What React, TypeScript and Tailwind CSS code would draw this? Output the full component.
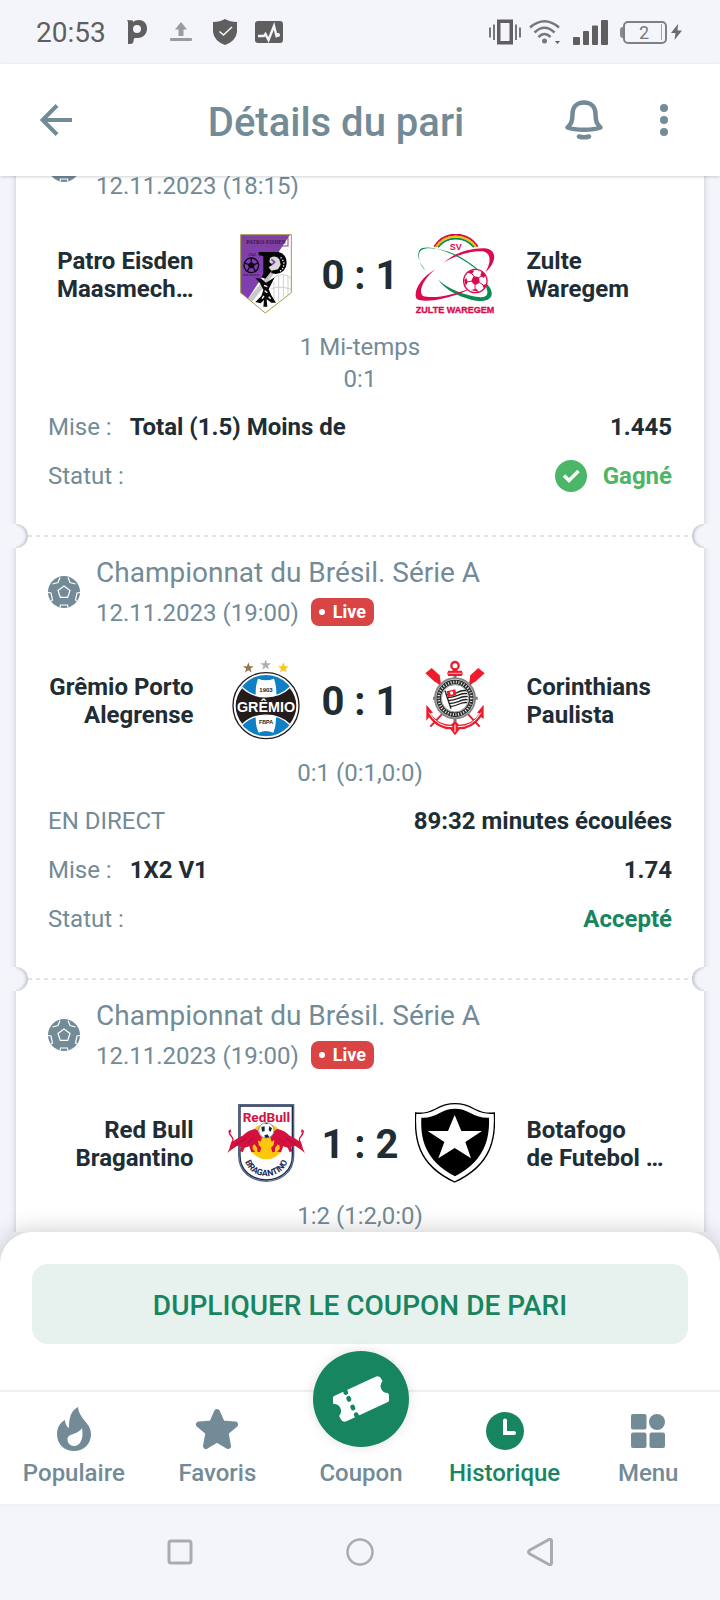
import type { ReactNode } from 'react';
import clsx from 'clsx';

type Team = { name: string[]; logo: ReactNode };

type Bet = {
  id: number;
  league?: string;
  date: string;
  live?: boolean;
  home: Team;
  away: Team;
  score: string;
  periods: string[];
  elapsed?: string;
  pick?: string;
  odds?: string;
  status?: 'won' | 'accepted';
};

const starPoints = '0,-10 2.4,-3.1 9.5,-3.1 3.8,1.2 5.9,8.1 0,3.9 -5.9,8.1 -3.8,1.2 -9.5,-3.1 -2.4,-3.1';

/* Club crests, all on a 240 unit grid */

function PatroLogo() {
  return (
    <svg viewBox="0 0 240 240" className="size-20" aria-hidden="true">
      <path d="M44 2H196V176L118 237L44 176Z" fill="#fff" />
      <path d="M44 2H192L66 194L44 176Z" fill="#7f3fae" />
      <path d="M134 112L66 194L78 204L142 122Z" fill="#c9c9c9" />
      <rect x="54" y="12" width="132" height="24" fill="none" stroke="#7a4a78" strokeWidth="3" />
      <text x="120" y="30" textAnchor="middle" fontSize="16" fontWeight="700" fill="#3a1550" fontFamily="Liberation Serif, serif">PATRO-EISDEN</text>
      <text x="78" y="66" textAnchor="middle" fontSize="12" fill="#1c0a28" fontFamily="Liberation Serif, serif">1942</text>
      <path d="M98 54H158Q182 60 182 88Q180 116 150 120L136 118V112L118 134L106 130L112 120V66L98 64Z" fill="#050505" />
      <path d="M132 72Q150 62 160 76L164 92L156 106L136 110L128 100L140 92L130 84Z" fill="#d9d9d9" />
      <path d="M136 76L146 84L138 92" fill="none" stroke="#7f3fae" strokeWidth="5" />
      <path d="M164 70L174 84L172 102L160 114" fill="none" stroke="#fff" strokeWidth="4" strokeDasharray="4 5" />
      <circle cx="76" cy="94" r="22" fill="none" stroke="#0c0512" strokeWidth="4" />
      <path d="M76 83L87 91L83 103H69L65 91Z" fill="#0c0512" />
      <path d="M76 83V72M87 91L97 86M83 103L89 112M69 103L63 112M65 91L55 86" stroke="#0c0512" strokeWidth="4" />
      <path d="M52 123H100" stroke="#3a1550" strokeWidth="3" strokeDasharray="6 2" />
      <path d="M132 152Q140 122 170 122Q190 124 196 136M144 144V196M158 126V200M172 122V190M186 126V180M136 164Q160 154 196 166" fill="none" stroke="#cfcfcf" strokeWidth="3" />
      <path d="M88 132L106 134L120 146L146 130L136 150L128 166L136 184L150 206H136L122 196L124 218H112L114 198L104 208L88 204L106 186L112 168L102 148Z" fill="#080808" />
      <path d="M114 154L124 158M116 170L124 176M128 188L134 194M108 194L114 186" stroke="#fff" strokeWidth="4" />
      <path d="M44 2H196V176L118 237L44 176Z" fill="none" stroke="#a49a4a" strokeWidth="3" />
    </svg>
  );
}

function ZulteLogo() {
  return (
    <svg viewBox="0 0 240 240" className="size-20" fill="none" aria-hidden="true">
      <path d="M58 38C88-10 156-10 188 38" stroke="#dc0a4c" strokeWidth="6" />
      <path d="M63 39C92-3 152-3 183 39" stroke="#f3c300" strokeWidth="6" />
      <path d="M69 40C96 5 148 5 177 40" stroke="#0b8a4d" strokeWidth="5" />
      <text x="122" y="47" textAnchor="middle" fontSize="27" fontWeight="700" fill="#dc0a4c" fontFamily="Liberation Sans, sans-serif">SV</text>
      <path d="M31 108C8 82 2 50 22 42C60 32 144 66 210 128C196 110 144 60 68 44C30 40 12 42 12 66C12 84 20 100 31 108Z" fill="#0b8a4d" />
      <path d="M216 150C242 178 230 200 200 201C160 201 94 174 70 137C94 162 148 184 196 190C218 190 222 180 212 156Z" fill="#0b8a4d" />
      <path d="M86 86C116 58 164 42 208 43C248 46 246 84 211 115C228 86 230 58 204 52C172 49 120 64 86 86Z" fill="#dc0a4c" />
      <path d="M62 106C14 130-8 180 6 195C24 208 110 196 178 158C120 182 56 196 24 186C8 174 26 132 62 106Z" fill="#dc0a4c" />
      <circle cx="181" cy="141" r="35" fill="#fff" stroke="#dc0a4c" strokeWidth="4" />
      <path d="M176 126L192 130L194 146L180 154L168 142ZM158 116L168 108L178 110L170 120ZM200 112L212 124L206 132L196 124ZM148 138L154 132L158 144L152 156ZM168 168L184 164L192 174ZM202 154L214 150L208 166Z" fill="#dc0a4c" />
      <path d="M176 126L170 118M192 130L202 126M194 146L206 154M180 154L180 166M168 142L156 144" stroke="#dc0a4c" strokeWidth="3" />
      <text x="120" y="237" textAnchor="middle" fontSize="27" fontWeight="700" fill="#dc0a4c" stroke="#dc0a4c" strokeWidth="1" fontFamily="Liberation Sans, sans-serif">ZULTE WAREGEM</text>
    </svg>
  );
}

function GremioLogo() {
  return (
    <svg viewBox="0 0 240 240" className="size-20" aria-hidden="true">
      <g transform="translate(67 24) scale(1.7)"><polygon points={starPoints} fill="#95754e" /></g>
      <g transform="translate(119 15) scale(1.7)"><polygon points={starPoints} fill="#b1b1b1" /></g>
      <g transform="translate(172 24) scale(1.7)"><polygon points={starPoints} fill="#fcc60a" /></g>
      <circle cx="120" cy="137" r="99" fill="#fff" stroke="#231c1a" strokeWidth="4" />
      <circle cx="120" cy="137" r="92" fill="#0f80c4" />
      <path d="M96 56Q120 66 144 56Q154 84 150 120H90Q86 84 96 56Z" fill="#fff" />
      <path d="M90 154H150Q152 196 142 218Q120 208 98 218Q86 196 90 154Z" fill="#fff" />
      <path d="M48 82C86 120 154 120 192 82C220 116 220 158 192 194C154 156 86 156 48 194C20 158 20 116 48 82Z" fill="#231c1a" stroke="#fff" strokeWidth="4" />
      <text x="120" y="97" textAnchor="middle" fontSize="18" fontWeight="700" fill="#231c1a" fontFamily="Liberation Sans, sans-serif">1903</text>
      <text x="120" y="156" textAnchor="middle" fontSize="43" fontWeight="700" fill="#fff" fontFamily="Liberation Sans, sans-serif">GRÊMIO</text>
      <text x="120" y="192" textAnchor="middle" fontSize="16" fontWeight="700" fill="#231c1a" fontFamily="Liberation Sans, sans-serif">FBPA</text>
    </svg>
  );
}

function CorinthiansLogo() {
  return (
    <svg viewBox="0 0 240 240" className="size-20" fill="none" aria-hidden="true">
      <path d="M64 62L194 200M176 62L46 200" stroke="#ee1c2b" strokeWidth="6" />
      <path d="M31 40L50 24L74 46L78 72L60 66Z" fill="#ee1c2b" />
      <path d="M209 40L190 24L166 46L162 72L180 66Z" fill="#ee1c2b" />
      <circle cx="120" cy="17" r="11" stroke="#ee1c2b" strokeWidth="7" />
      <path d="M113 26H127V32H140Q146 40 140 48H100Q94 40 100 32H113Z" fill="#ee1c2b" />
      <path d="M100 40H140" stroke="#fff" strokeWidth="2" />
      <path d="M34 134L54 158L46 160Q68 194 108 194L120 182L132 194Q172 194 194 160L186 158L206 134V176L198 172Q172 208 134 208L120 226L106 208Q68 208 42 172L34 182Z" fill="#ee1c2b" />
      <path d="M42 158Q68 202 112 200M198 158Q172 202 128 200M120 194V216" stroke="#fff" strokeWidth="3" />
      <path d="M120 48V186M54 115H188" stroke="#777" strokeWidth="9" />
      <circle cx="120" cy="115" r="60" fill="#fff" stroke="#858585" strokeWidth="6" />
      <circle cx="120" cy="115" r="49" stroke="#2c2c2c" strokeWidth="14" />
      <circle cx="120" cy="115" r="49" stroke="#e9e9e9" strokeWidth="8" strokeDasharray="3 5" />
      <circle cx="120" cy="115" r="41" fill="#fff" stroke="#666" strokeWidth="2" />
      <path d="M96 104Q112 104 126 98Q140 90 154 92M98 113Q114 112 128 106Q142 99 156 101M100 122Q116 121 130 115Q144 108 158 110M102 131Q118 130 132 124Q146 117 158 119M104 140Q120 138 133 132Q147 126 156 128M90 92L108 146" stroke="#1f1f1f" strokeWidth="4" />
      <path d="M95 94L121 88L124 106L99 111Z" fill="#ee1c2b" />
      <circle cx="110" cy="99" r="5" fill="#fff" />
    </svg>
  );
}

function BragantinoBull() {
  return (
    <>
      <path d="M4 150L10 138L14 122Q26 108 50 98Q66 82 86 78Q96 80 100 92L108 104L104 116L96 112L98 126L106 134L102 148L94 146V136L86 124L80 128L80 138L88 146L76 148L70 130L56 134L50 148L42 144L46 132L34 128L16 140Z" fill="#d5103f" />
      <path d="M16 120Q26 110 16 100Q8 92 10 82" fill="none" stroke="#d5103f" strokeWidth="4" />
      <path d="M8 84L14 78L16 90Z" fill="#d5103f" />
      <path d="M40 118L62 106M66 120L80 106M28 126L40 118" stroke="#8d0b30" strokeWidth="2" />
    </>
  );
}

function BragantinoLogo() {
  return (
    <svg viewBox="0 0 240 240" className="size-20" aria-hidden="true">
      <path d="M38 5H203V158C203 206 166 234 121 235C76 234 38 206 38 158Z" fill="#fff" stroke="#56657f" strokeWidth="4" />
      <path d="M42 9H199V158C199 203 164 230 121 231C78 230 42 203 42 158Z" fill="none" stroke="#1b2a55" strokeWidth="4" />
      <text x="121" y="58" textAnchor="middle" fontSize="41" fontWeight="700" fill="#d5103f" fontFamily="Roboto, sans-serif">RedBull</text>
      <circle cx="121" cy="116" r="53" fill="#fdc70c" />
      <BragantinoBull />
      <g transform="translate(241 0) scale(-1 1)"><BragantinoBull /></g>
      <circle cx="121" cy="82" r="23" fill="#fff" stroke="#8d93a3" strokeWidth="3" />
      <path d="M106 72L116 70L116 84L108 86ZM130 70L138 76L134 86L128 82ZM114 98L124 94L130 102L120 105ZM116 60L126 60L122 64Z" fill="#16213f" />
      <path id="bragantino-arc" d="M54 156C58 240 184 240 188 156" fill="none" />
      <text fontSize="26" fontWeight="700" fill="#1b2a55" fontFamily="Roboto, sans-serif">
        <textPath href="#bragantino-arc" startOffset="50%" textAnchor="middle">BRAGANTINO</textPath>
      </text>
    </svg>
  );
}

function BotafogoLogo() {
  return (
    <svg viewBox="0 0 240 240" className="size-20" aria-hidden="true">
      <path d="M2 30Q32 34 62 18Q90 2 120 2Q150 2 178 18Q208 34 238 30C242 100 234 184 119 237C4 184-2 100 2 30Z" fill="#fff" stroke="#000" strokeWidth="4" />
      <path d="M19 44Q46 46 74 30Q96 17 120 17Q144 17 166 30Q194 46 222 44C224 104 212 172 120 220C28 172 16 104 19 44Z" fill="#000" />
      <path d="M119 36L139 84H201L151 117L168 166L119 135L70 166L88 117L38 84H99Z" fill="#fff" />
    </svg>
  );
}

function BallIcon() {
  return (
    <svg viewBox="0 0 32 32" className="size-8 shrink-0" fill="none" stroke="#fff" strokeWidth="1.2" aria-hidden="true">
      <circle cx="16" cy="16" r="16" fill="#728b97" stroke="none" />
      <path d="M16 10L22 14.400L19.700 21.400H12.300L10 14.400Z" />
      <path d="M4.500 8L10 6.500L12 1.500M27.500 8L22 6.500L20 1.500" />
      <path d="M0 16.500L3 17L4.500 24L3 25M32 16.500L29 17L27.500 24L29 25M12 31.500L12.500 29H19.500L20 31.500" />
    </svg>
  );
}

const bets: Bet[] = [
  {
    id: 1,
    date: '12.11.2023 (18:15)',
    home: { name: ['Patro Eisden', 'Maasmech…'], logo: <PatroLogo /> },
    away: { name: ['Zulte', 'Waregem'], logo: <ZulteLogo /> },
    score: '0 : 1',
    periods: ['1 Mi-temps', '0:1'],
    pick: 'Total (1.5) Moins de',
    odds: '1.445',
    status: 'won',
  },
  {
    id: 2,
    league: 'Championnat du Brésil. Série A',
    date: '12.11.2023 (19:00)',
    live: true,
    home: { name: ['Grêmio Porto', 'Alegrense'], logo: <GremioLogo /> },
    away: { name: ['Corinthians', 'Paulista'], logo: <CorinthiansLogo /> },
    score: '0 : 1',
    periods: ['0:1 (0:1,0:0)'],
    elapsed: '89:32 minutes écoulées',
    pick: '1X2 V1',
    odds: '1.74',
    status: 'accepted',
  },
  {
    id: 3,
    league: 'Championnat du Brésil. Série A',
    date: '12.11.2023 (19:00)',
    live: true,
    home: { name: ['Red Bull', 'Bragantino'], logo: <BragantinoLogo /> },
    away: { name: ['Botafogo', 'de Futebol …'], logo: <BotafogoLogo /> },
    score: '1 : 2',
    periods: ['1:2 (1:2,0:0)'],
  },
];

function StatusBar() {
  return (
    <div className="flex h-16 shrink-0 items-center justify-between bg-[#f4f5fa] pr-[38px] pl-9 text-[#5f5f60]">
      <div className="flex items-center">
        <span className="w-[91px] pt-0.5 text-[28px]">20:53</span>
        <svg viewBox="0 0 20 26" className="mr-[22px] h-[26px] w-5" aria-hidden="true">
          <path d="M0 1L6 1.500V3Q8 1 12 1C17 1 20 5 20 9.500C20 15 16 19 11 19H7.500Q6.500 20 6.500 22Q6.500 25 3 25H1V4Q1 2 0 1ZM10 6A4 4 0 1 0 10 14A4 4 0 1 0 10 6Z" fill="currentColor" fillRule="evenodd" />
        </svg>
        <svg viewBox="0 0 24 20" className="mr-5 h-5 w-6" fill="#9b9b9d" aria-hidden="true">
          <path d="M12 0L18 7.500H14.500V14H9.500V7.500H6Z" />
          <rect x="1" y="16" width="22" height="3" rx="1" />
        </svg>
        <svg viewBox="0 0 24 26" className="mr-[18px] h-[26px] w-6" aria-hidden="true">
          <path d="M12 0Q17 3 24 3V13Q23 22 12 26Q1 22 0 13V3Q7 3 12 0Z" fill="currentColor" />
          <path d="M6.500 12.500L10.500 16L19 8" fill="none" stroke="#f4f5fa" strokeWidth="1.600" />
        </svg>
        <svg viewBox="0 0 28 24" className="h-6 w-7" aria-hidden="true">
          <rect y="1" width="28" height="22" rx="3" fill="currentColor" />
          <path d="M3 16H9L10.500 14L13.500 20L19 6L21.500 16L24 14" fill="none" stroke="#f4f5fa" strokeWidth="2.400" />
          <circle cx="23" cy="15" r="2" fill="#f4f5fa" />
        </svg>
      </div>
      <div className="flex items-center">
        <svg viewBox="0 0 32 26" className="mr-2 h-[26px] w-8" aria-hidden="true">
          <path d="M8 .5H24V25.500H8ZM11.500 4V22H20.500V4Z" fill="currentColor" fillRule="evenodd" />
          <path d="M1 8.500V18.500M5 5.500V21M27 5.500V21M31 8.500V18.500" stroke="#77777a" strokeWidth="2" />
        </svg>
        <svg viewBox="0 0 32 26" className="mr-3 h-[26px] w-8" fill="none" stroke="#77777a" strokeWidth="2.500" aria-hidden="true">
          <path d="M1 8.500Q15.500-4 30 8.500M5.500 13.500Q15.500 4 25.500 13.500M9.500 18Q15.500 12 21.500 18" />
          <circle cx="15.500" cy="22" r="2.500" fill="#77777a" stroke="none" />
          <path d="M26 22H31L28.500 25Z" fill="#5f5f60" stroke="none" />
        </svg>
        <svg viewBox="0 0 35 26" className="mr-3 h-[26px] w-[35px]" fill="currentColor" aria-hidden="true">
          <rect y="18" width="7" height="8" rx="1" />
          <rect x="10" y="12" width="6" height="14" rx="1" />
          <rect x="19" y="6.500" width="6" height="19.500" rx="1" />
          <rect x="28" y="1" width="7" height="25" rx="1" />
        </svg>
        <div className="flex items-center">
          <span className="h-[11px] w-[3px] rounded-l-sm bg-[#8a8a8c]" />
          <span className="flex h-[23px] w-11 items-center justify-between rounded-[5px] border-2 border-[#808082] pr-[3px] pl-[14px] text-[18px] text-[#77777a]">
            2
            <span className="h-4 w-px bg-[#f08563]" />
          </span>
        </div>
        <svg viewBox="0 0 11 16" className="ml-1 h-4 w-[11px]" fill="#6b6b6d" aria-hidden="true">
          <path d="M7 0L0 9H4.500L3.500 16L11 6.500H6.500Z" />
        </svg>
      </div>
    </div>
  );
}

function Header() {
  return (
    <header className="relative z-10 flex h-28 shrink-0 items-center bg-white pr-4 text-[#728b97] shadow-[0_1px_3px_rgba(0,0,0,0.18)]">
      <button type="button" aria-label="Retour" className="flex h-full w-28 items-center justify-center">
        <svg viewBox="0 0 32 32" className="size-8" fill="none" stroke="currentColor" strokeWidth="4" aria-hidden="true">
          <path d="M17 1.500L2.500 16L17 30.500M2.500 16H32" />
        </svg>
      </button>
      <h1 className="flex-1 pt-1.5 pl-4 text-center text-[40px] leading-[48px] font-medium">Détails du pari</h1>
      <button type="button" aria-label="Notifications" className="flex h-full w-20 items-center justify-center">
        <svg viewBox="0 0 38 40" className="h-10 w-[38px]" fill="none" stroke="currentColor" strokeWidth="4.500" strokeLinejoin="round" strokeLinecap="round" aria-hidden="true">
          <path d="M19 2.500C12 2.500 7.500 7 7.500 14C7.500 22 6 24 2.500 27.500C10 30.500 28 30.500 35.500 27.500C32 24 30.500 22 30.500 14C30.500 7 26 2.500 19 2.500Z" />
          <path d="M14 36.500Q19 38 24 36.500" />
        </svg>
      </button>
      <button type="button" aria-label="Plus" className="flex h-full w-20 items-center justify-center">
        <svg viewBox="0 0 8 32" className="h-8 w-2" fill="currentColor" aria-hidden="true">
          <circle cx="4" cy="4" r="4" />
          <circle cx="4" cy="16" r="4" />
          <circle cx="4" cy="28" r="4" />
        </svg>
      </button>
    </header>
  );
}

function Separator() {
  return (
    <div className="absolute inset-x-0 -top-3 h-6">
      <div className="absolute inset-x-3 top-[11px] h-0.5 bg-[repeating-linear-gradient(to_right,#dde5e5_0_4px,transparent_4px_8px)]" />
      <span className="absolute -left-3 size-6 rounded-full bg-[#f4f5fa] shadow-[inset_-2px_0_3px_rgba(60,70,90,0.28)]" />
      <span className="absolute -right-3 size-6 rounded-full bg-[#f4f5fa] shadow-[inset_2px_0_3px_rgba(60,70,90,0.28)]" />
      {/* hides the card edge where the notch opens outwards */}
      <span className="absolute -left-3 h-6 w-3 bg-[#f4f5fa]" />
      <span className="absolute -right-3 h-6 w-3 bg-[#f4f5fa]" />
    </div>
  );
}

function TeamName({ lines, align }: { lines: string[]; align: 'left' | 'right' }) {
  return (
    <div className={clsx('flex-1 pt-0.5 leading-7 font-bold whitespace-nowrap', align === 'right' ? 'text-right' : 'text-left')}>
      {lines.map((line) => (
        <div key={line}>{line}</div>
      ))}
    </div>
  );
}

function BetCard({ bet }: { bet: Bet }) {
  return (
    <article className="relative px-8 pt-4 pb-9 text-2xl text-[#202d34]">
      {bet.league && <Separator />}
      <div className="flex h-20 items-center gap-4 text-[#728b97]">
        <BallIcon />
        <div className="flex h-full flex-col justify-end">
          {bet.league && <h2 className="pt-px text-[28px] leading-10">{bet.league}</h2>}
          <div className="flex h-10 items-center gap-3">
            <time>{bet.date}</time>
            {bet.live && (
              <span className="mb-0.5 flex h-7 items-center gap-2 rounded-lg bg-[#d94445] px-2 text-lg font-bold text-white">
                <span className="size-1.5 rounded-full bg-white" />
                Live
              </span>
            )}
          </div>
        </div>
      </div>

      <div className="mt-7 flex h-20 items-center">
        <TeamName lines={bet.home.name} align="right" />
        <div className="ml-8">{bet.home.logo}</div>
        <div className="w-[109px] pt-1 text-center text-[40px] leading-none font-bold">{bet.score}</div>
        <div className="mr-8">{bet.away.logo}</div>
        <TeamName lines={bet.away.name} align="left" />
      </div>

      <div className="mt-[17px] mb-[7px] text-center leading-8 text-[#728b97]">
        {bet.periods.map((period) => (
          <p key={period}>{period}</p>
        ))}
      </div>

      <dl>
        {bet.elapsed && (
          <div className="flex h-[49px] items-center justify-between">
            <dt className="text-[#728b97]">EN DIRECT</dt>
            <dd className="font-bold">{bet.elapsed}</dd>
          </div>
        )}
        {bet.pick && (
          <div className="flex h-[49px] items-center gap-[18px]">
            <dt className="text-[#728b97]">Mise :</dt>
            <dd className="font-bold">{bet.pick}</dd>
            <dd className="ml-auto font-bold">{bet.odds}</dd>
          </div>
        )}
        {bet.status && (
          <div className="flex h-[49px] items-center justify-between">
            <dt className="text-[#728b97]">Statut :</dt>
            {bet.status === 'won' ? (
              <dd className="flex items-center gap-4 font-bold text-[#4bb568]">
                <svg viewBox="0 0 32 32" className="size-8" aria-hidden="true">
                  <circle cx="16" cy="16" r="16" fill="currentColor" />
                  <path d="M9 15.500L14 20.500L23.500 11" fill="none" stroke="#fff" strokeWidth="3.500" />
                </svg>
                Gagné
              </dd>
            ) : (
              <dd className="font-bold text-[#178560]">Accepté</dd>
            )}
          </div>
        )}
      </dl>
    </article>
  );
}

const navItems = [
  {
    label: 'Populaire',
    icon: (
      <svg viewBox="0 0 48 48" className="size-12" fill="currentColor" aria-hidden="true">
        <path d="M28 1C20 5 19 14 19 22C17 21 15 18 15 14C9 17 7 23 7 28C7 38 14 45 24 45C34 45 41 38 41 28C41 17 29 13 28 1ZM32 22C34 33 30 40 24 40C20 40 17.500 37 17.500 33.500C17.500 27 28 29 32 22Z" fillRule="evenodd" />
      </svg>
    ),
  },
  {
    label: 'Favoris',
    icon: (
      <svg viewBox="0 0 48 48" className="size-12" fill="currentColor" stroke="currentColor" strokeWidth="6" strokeLinejoin="round" aria-hidden="true">
        <path d="M24 6L29 17.500L42 18.500L32.500 26.500L35 40L24 33.500L13 40L15.500 26.500L6 18.500L19 17.500Z" />
      </svg>
    ),
  },
  { label: 'Coupon', icon: null },
  {
    label: 'Historique',
    active: true,
    icon: (
      <svg viewBox="0 0 48 48" className="size-12" aria-hidden="true">
        <circle cx="24" cy="25" r="19" fill="currentColor" />
        <path d="M24 14.500V27H33" fill="none" stroke="#fff" strokeWidth="4" strokeLinecap="round" />
      </svg>
    ),
  },
  {
    label: 'Menu',
    icon: (
      <svg viewBox="0 0 48 48" className="size-12" fill="currentColor" aria-hidden="true">
        <rect x="7" y="8" width="15.500" height="15.500" rx="2" />
        <circle cx="33" cy="16" r="8" />
        <rect x="7" y="26.500" width="15.500" height="15.500" rx="2" />
        <rect x="25.500" y="26.500" width="15.500" height="15.500" rx="2" />
      </svg>
    ),
  },
];

function BottomNav() {
  return (
    <nav className="relative grid h-[114px] shrink-0 grid-cols-5 border-t-2 border-[#f0f0f2] bg-white pl-0.5 text-[#728b97] shadow-[0_0_4px_rgba(0,0,0,0.04)]">
      {navItems.map((item) => (
        <a
          key={item.label}
          href="#"
          className={clsx('relative flex flex-col items-center gap-[5px] pt-[14px] text-2xl leading-7 font-medium', item.active && 'text-[#178560]')}
        >
          {item.icon ?? (
            <>
              <span className="size-12" />
              <span className="absolute -top-[41px] flex size-24 items-center justify-center rounded-full bg-[#178560] shadow-[0_0_12px_rgba(0,0,0,0.12)]">
                <svg viewBox="0 0 56 46" className="h-[46px] w-14" aria-hidden="true">
                  <g transform="rotate(-25 28 23)">
                    <path d="M6 9H50Q55 9 55 14V16A7 7 0 0 0 55 29V32Q55 37 50 37H6Q1 37 1 32V29A7 7 0 0 0 1 16V14Q1 9 6 9Z" fill="#fff" />
                    <path d="M17 9V11M17 17V18.500M17 26.500V28M17 35V37" stroke="#178560" strokeWidth="4.500" strokeLinecap="round" />
                  </g>
                </svg>
              </span>
            </>
          )}
          {item.label}
        </a>
      ))}
    </nav>
  );
}

function SystemNav() {
  return (
    <div className="grid h-24 shrink-0 grid-cols-3 place-items-center bg-[#f4f5fa] px-[12.5%] text-[#ababad]">
      <button type="button" aria-label="Applications récentes">
        <svg viewBox="0 0 28 28" className="size-7" fill="none" stroke="currentColor" strokeWidth="3" aria-hidden="true">
          <rect x="3" y="3" width="22" height="22" rx="2" />
        </svg>
      </button>
      <button type="button" aria-label="Accueil">
        <svg viewBox="0 0 28 28" className="size-7" fill="none" stroke="currentColor" strokeWidth="2.500" aria-hidden="true">
          <circle cx="14" cy="14" r="12.500" />
        </svg>
      </button>
      <button type="button" aria-label="Retour système">
        <svg viewBox="0 0 28 28" className="size-7" fill="none" stroke="currentColor" strokeWidth="3" strokeLinejoin="round" aria-hidden="true">
          <path d="M2.500 14Q2.500 13 4 12L23 1.500Q25.500 1 25.500 3V25Q25.500 27 23 26.500L4 16Q2.500 15 2.500 14Z" />
        </svg>
      </button>
    </div>
  );
}

export default function App() {
  return (
    <div className="flex h-screen flex-col bg-[#f4f5fa] font-['Roboto',sans-serif]">
      <StatusBar />
      <Header />

      {/* Bet list, scrolled under the header */}
      <main className="min-h-0 flex-1 overflow-hidden px-4">
        <div className="-mt-[66px] bg-white shadow-[0_0_6px_rgba(50,60,90,0.25)]">
          {bets.map((bet) => (
            <BetCard key={bet.id} bet={bet} />
          ))}
        </div>
      </main>

      {/* Bottom sheet */}
      <section className="relative shrink-0 rounded-t-[32px] bg-white px-8 pt-8 pb-[46px] shadow-[0_0_24px_rgba(0,0,0,0.22)]">
        <button type="button" className="h-20 w-full rounded-2xl bg-[#e7f1ee] pt-[3px] text-[28px] font-medium text-[#178560]">
          DUPLIQUER LE COUPON DE PARI
        </button>
      </section>

      <BottomNav />
      <SystemNav />
    </div>
  );
}
